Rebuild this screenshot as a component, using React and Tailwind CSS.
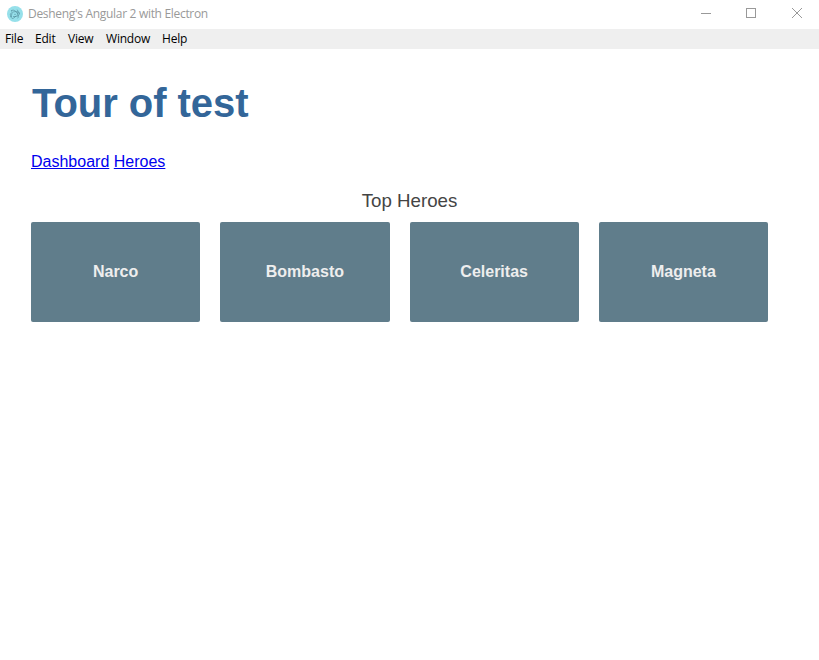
const menus = [
  { label: 'File', box: 'w-[30px]' },
  { label: 'Edit', box: 'w-[33px]' },
  { label: 'View', box: 'w-[38px]' },
  { label: 'Window', box: 'w-[56px]' },
  { label: 'Help', box: 'w-[40px]' },
];
const heroes = ['Narco', 'Bombasto', 'Celeritas', 'Magneta'];

function ElectronIcon() {
  return (
    <svg width="16" height="16" viewBox="0 0 16 16" fill="none">
      <circle cx="8" cy="8" r="8" fill="#96e0ea" />
      <g stroke="#4b8494" strokeWidth="0.6" strokeLinecap="round">
        <path d="M3.6 9.6C2.6 8.3 4 6.6 6.6 5.9c2.2-.6 4.300-.3 5.300.5" />
        <path d="M5.200 4.200c1.500-.7 3.900.9 5.200 3.300 1.100 2 1.200 3.900.4 4.600" />
        <path d="M12.300 8.500c-.6 1.500-3.200 2.400-5.900 2" />
        <path d="M10.200 3.800c1.200.5 1.200 2.300.4 4.200M5 7.700c-1.200 2.200-1.200 4.100-.1 4.600 1 .5 2.700-.5 4.100-2.300" />
      </g>
      <circle cx="8" cy="8.200" r="0.550" fill="#4b8494" />
      <circle cx="12.300" cy="7.200" r="0.600" fill="#4b8494" />
      <circle cx="4.500" cy="4.800" r="0.600" fill="#4b8494" />
      <circle cx="4" cy="10.500" r="0.600" fill="#4b8494" />
    </svg>
  );
}

function TitleBar() {
  return (
    <header className="flex h-[29px] items-start justify-between bg-white pl-[7px] font-['Open_Sans','Noto_Sans',sans-serif]">
      <div className="flex h-[27px] items-center gap-[5px]">
        <ElectronIcon />
        <span className="w-[182px] whitespace-nowrap text-[12px] leading-4 tracking-[-0.31px] text-[#999999]">
          Desheng's Angular 2 with Electron
        </span>
      </div>
      <svg width="138" height="27" viewBox="0 0 138 27" fill="none" stroke="#999999" shapeRendering="crispEdges">
        <path d="M20 13.5h10" />
        <rect x="65.5" y="8.5" width="9" height="9" />
        <path d="M111 8l10 10M121 8l-10 10" shapeRendering="auto" />
      </svg>
    </header>
  );
}

export default function App() {
  return (
    <div className="h-[660px] w-[819px] overflow-hidden bg-white font-['Liberation_Sans',Arial,sans-serif]">
      <TitleBar />
      <nav className="flex h-5 items-center bg-[#efefef] pl-[5px] font-['Open_Sans','Noto_Sans',sans-serif] text-[12px] leading-5 tracking-[-0.2px] text-black">
        {menus.map((m) => (
          <span key={m.label} className={`${m.box} shrink-0`}>{m.label}</span>
        ))}
      </nav>
      <main className="px-[31px] pt-[31px]">
        <h1 className="pl-px text-[40px] font-bold leading-[46px] tracking-[-0.04px] text-[#336699]">Tour of test</h1>
        <nav className="mt-[27px] flex gap-[4.5px] text-[16px] leading-[18px] text-[#0000ee]">
          <a href="#dashboard" className="underline">Dashboard</a>
          <a href="#heroes" className="underline">Heroes</a>
        </nav>
        <h3 className="mt-[19px] text-center text-[18.72px] font-normal leading-[21px] text-[#444444]">Top Heroes</h3>
        <div className="mt-[11px] grid grid-cols-4 gap-5 pr-5">
          {heroes.map((name) => (
            <div key={name} className="flex h-[100px] items-center justify-center rounded-[2px] bg-[#607d8b] text-[16px] font-bold leading-[18px] text-[#eeeeee]">
              {name}
            </div>
          ))}
        </div>
      </main>
    </div>
  );
}
